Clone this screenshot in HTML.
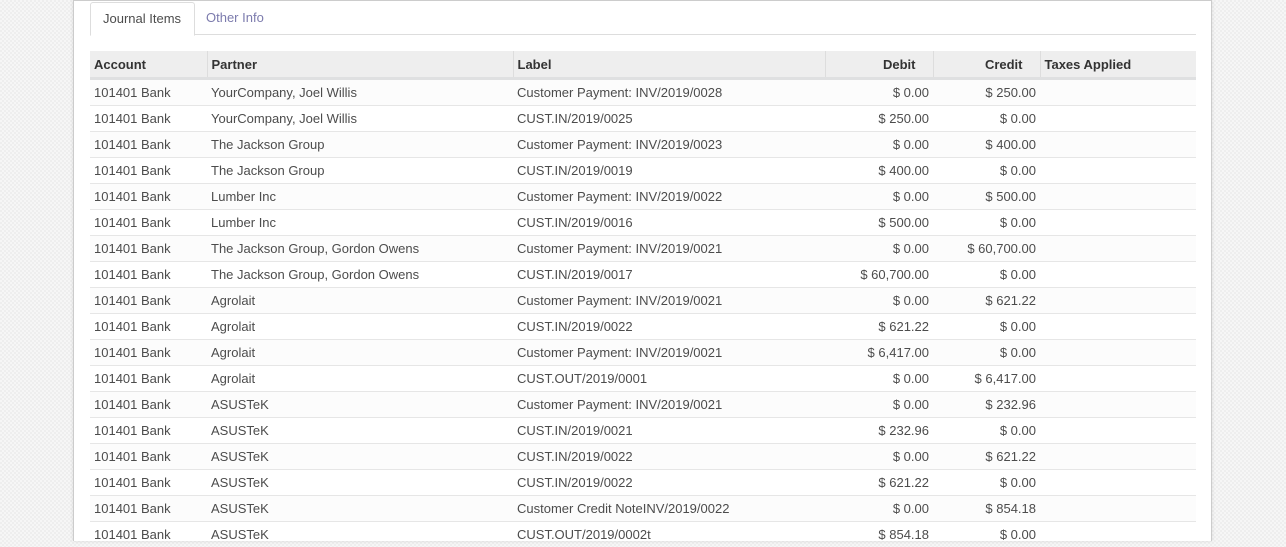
<!DOCTYPE html>
<html><head><meta charset="utf-8"><style>
body{margin:0;width:1286px;height:540px;overflow:hidden;background:#f2f2f2;background-image:repeating-conic-gradient(#eee 0 25%,#f6f6f6 0 50%);background-size:4px 4px;font-family:"Liberation Sans",sans-serif;font-size:13px;color:#4c4c4c}
.sheet{position:absolute;left:73px;top:0;width:1137px;height:540px;background:#fff;border-left:1px solid #ccc;border-right:1px solid #ccc;border-top:1px solid #ccc;box-shadow:0 0 4px rgba(0,0,0,.1)}
.tabs{position:absolute;left:16px;top:1px;width:1106px;height:32px;border-bottom:1px solid #ddd}
.tab{position:absolute;top:0;height:32px;line-height:32px;padding:0 12px}
.t1{left:0;width:79px;border:1px solid #ddd;border-bottom:1px solid #fff;border-radius:3px 3px 0 0;background:#fff;color:#4c4c4c;height:32px}
.t2{left:104px;color:#7c7bad}
table{position:absolute;left:16px;top:50px;width:1106px;border-collapse:collapse;table-layout:fixed}
th{background:#eee;height:26px;font-weight:bold;text-align:left;padding:0 4px;border-left:1px solid #ddd;border-bottom:3px solid #dfe0e1;color:#333}
th:first-child{border-left:none}
th.r{padding-right:17px}
td{height:25px;padding:0 4px;border-top:1px solid #e6e6e6;white-space:nowrap}
tr:nth-child(odd) td{background:#fcfcfc}
.r{text-align:right}
</style></head><body>
<div class="sheet">
<div class="tabs"><div class="tab t1">Journal Items</div><div class="tab t2">Other Info</div></div>
<table>
<colgroup><col style="width:117px"><col style="width:306px"><col style="width:312px"><col style="width:108px"><col style="width:107px"><col style="width:156px"></colgroup>
<thead><tr><th>Account</th><th>Partner</th><th>Label</th><th class="r">Debit</th><th class="r">Credit</th><th>Taxes Applied</th></tr></thead>
<tbody>
<tr><td>101401 Bank</td><td>YourCompany, Joel Willis</td><td>Customer Payment: INV/2019/0028</td><td class="r">$ 0.00</td><td class="r">$ 250.00</td><td></td></tr>
<tr><td>101401 Bank</td><td>YourCompany, Joel Willis</td><td>CUST.IN/2019/0025</td><td class="r">$ 250.00</td><td class="r">$ 0.00</td><td></td></tr>
<tr><td>101401 Bank</td><td>The Jackson Group</td><td>Customer Payment: INV/2019/0023</td><td class="r">$ 0.00</td><td class="r">$ 400.00</td><td></td></tr>
<tr><td>101401 Bank</td><td>The Jackson Group</td><td>CUST.IN/2019/0019</td><td class="r">$ 400.00</td><td class="r">$ 0.00</td><td></td></tr>
<tr><td>101401 Bank</td><td>Lumber Inc</td><td>Customer Payment: INV/2019/0022</td><td class="r">$ 0.00</td><td class="r">$ 500.00</td><td></td></tr>
<tr><td>101401 Bank</td><td>Lumber Inc</td><td>CUST.IN/2019/0016</td><td class="r">$ 500.00</td><td class="r">$ 0.00</td><td></td></tr>
<tr><td>101401 Bank</td><td>The Jackson Group, Gordon Owens</td><td>Customer Payment: INV/2019/0021</td><td class="r">$ 0.00</td><td class="r">$ 60,700.00</td><td></td></tr>
<tr><td>101401 Bank</td><td>The Jackson Group, Gordon Owens</td><td>CUST.IN/2019/0017</td><td class="r">$ 60,700.00</td><td class="r">$ 0.00</td><td></td></tr>
<tr><td>101401 Bank</td><td>Agrolait</td><td>Customer Payment: INV/2019/0021</td><td class="r">$ 0.00</td><td class="r">$ 621.22</td><td></td></tr>
<tr><td>101401 Bank</td><td>Agrolait</td><td>CUST.IN/2019/0022</td><td class="r">$ 621.22</td><td class="r">$ 0.00</td><td></td></tr>
<tr><td>101401 Bank</td><td>Agrolait</td><td>Customer Payment: INV/2019/0021</td><td class="r">$ 6,417.00</td><td class="r">$ 0.00</td><td></td></tr>
<tr><td>101401 Bank</td><td>Agrolait</td><td>CUST.OUT/2019/0001</td><td class="r">$ 0.00</td><td class="r">$ 6,417.00</td><td></td></tr>
<tr><td>101401 Bank</td><td>ASUSTeK</td><td>Customer Payment: INV/2019/0021</td><td class="r">$ 0.00</td><td class="r">$ 232.96</td><td></td></tr>
<tr><td>101401 Bank</td><td>ASUSTeK</td><td>CUST.IN/2019/0021</td><td class="r">$ 232.96</td><td class="r">$ 0.00</td><td></td></tr>
<tr><td>101401 Bank</td><td>ASUSTeK</td><td>CUST.IN/2019/0022</td><td class="r">$ 0.00</td><td class="r">$ 621.22</td><td></td></tr>
<tr><td>101401 Bank</td><td>ASUSTeK</td><td>CUST.IN/2019/0022</td><td class="r">$ 621.22</td><td class="r">$ 0.00</td><td></td></tr>
<tr><td>101401 Bank</td><td>ASUSTeK</td><td>Customer Credit NoteINV/2019/0022</td><td class="r">$ 0.00</td><td class="r">$ 854.18</td><td></td></tr>
<tr><td>101401 Bank</td><td>ASUSTeK</td><td>CUST.OUT/2019/0002t</td><td class="r">$ 854.18</td><td class="r">$ 0.00</td><td></td></tr>
</tbody></table>
</div>
</body></html>
